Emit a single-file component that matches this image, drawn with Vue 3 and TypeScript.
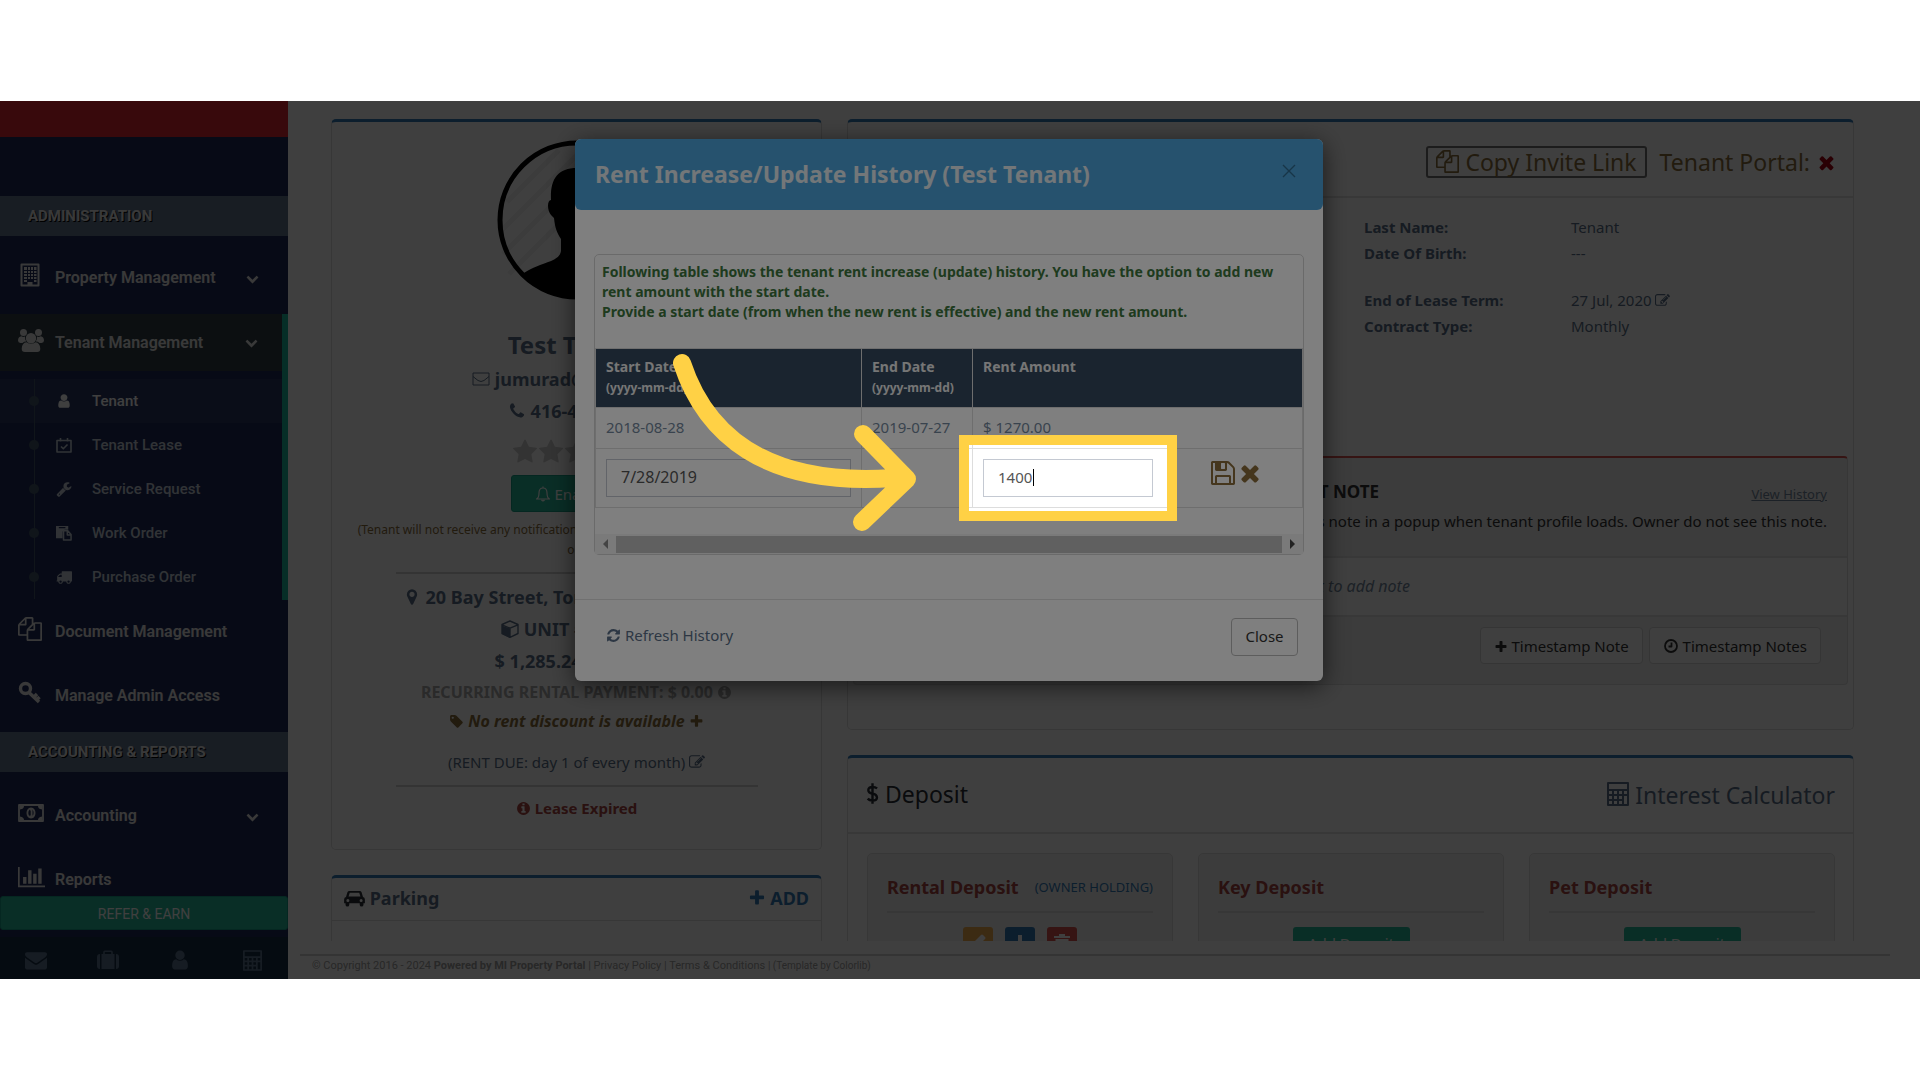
<script setup lang="ts">
import { h, ref } from 'vue'
import type { FunctionalComponent } from 'vue'

interface Glyph {
  box: number
  wide?: number
  fill?: string
  line?: string
  weight?: number
}

const glyphs: Record<string, Glyph> = {
  chevron: { box: 1792, fill: 'M1683 808l-742 741q-19 19-45 19t-45-19l-742-741q-19-19-19-45.5t19-45.5l166-165q19-19 45-19t45 19l531 531 531-531q19-19 45-19t45 19l166 165q19 19 19 45.5t-19 45.5z' },
  plus: { box: 1792, fill: 'M1600 736v192q0 40-28 68t-68 28h-416v416q0 40-28 68t-68 28h-192q-40 0-68-28t-28-68v-416h-416q-40 0-68-28t-28-68v-192q0-40 28-68t68-28h416v-416q0-40 28-68t68-28h192q40 0 68 28t28 68v416h416q40 0 68 28t28 68z' },
  times: { box: 1792, fill: 'M1490 1322q0 40-28 68l-136 136q-28 28-68 28t-68-28l-294-294-294 294q-28 28-68 28t-68-28l-136-136q-28-28-28-68t28-68l294-294-294-294q-28-28-28-68t28-68l136-136q28-28 68-28t68 28l294 294 294-294q28-28 68-28t68 28l136 136q28 28 28 68t-28 68l-294 294 294 294q28 28 28 68z' },
  envelope: { box: 1792, fill: 'M1792 710v794q0 66-47 113t-113 47h-1472q-66 0-113-47t-47-113v-794q44 49 101 87 362 246 497 345 57 42 92.5 65.5t94.5 48 110 24.5h2q51 0 110-24.5t94.5-48 92.5-65.5q170-123 498-345 57-39 100-87zm0-294q0 79-49 151t-122 123q-376 261-468 325-10 7-42.5 31t-54 38.5-52 32.5-57.5 27-50 9h-2q-23 0-50-9t-57.5-27-52-32.5-54-38.5-42.5-31q-91-64-262-182.5t-205-142.5q-62-42-117-115.5t-55-136.5q0-78 41.5-130t118.5-52h1472q65 0 112.5 47t47.5 113z' },
  envelopeOpen: { box: 18, line: 'M1 3h16v12H1zM1 6.500l5 4q3 2 6 0l5-4', weight: 1 },
  star: { box: 1792, fill: 'M1728 647q0 22-26 48l-363 354 86 500q1 7 1 20 0 21-10.500 35.500t-30.500 14.500q-19 0-40-12l-449-236-449 236q-22 12-40 12-21 0-31.500-14.500t-10.500-35.500q0-6 2-20l86-500-364-354q-25-27-25-48 0-37 56-46l502-73 225-455q19-41 49-41t49 41l225 455 502 73q56 9 56 46z' },
  user: { box: 1792, fill: 'M1536 1399q0 109-62.500 187t-150.500 78h-854q-88 0-150.500-78t-62.500-187q0-85 8.500-160.500t31.500-152 58.500-131 94-89 134.500-34.500q131 128 313 128t313-128q76 0 134.500 34.500t94 89 58.500 131 31.500 152 8.500 160.500zm-256-887q0 159-112.500 271.500t-271.500 112.500-271.500-112.500-112.500-271.500 112.500-271.500 271.500-112.500 271.500 112.500 112.500 271.500z' },
  info: { box: 1792, fill: 'M1152 1376v-160q0-14-9-23t-23-9h-96v-512q0-14-9-23t-23-9h-320q-14 0-23 9t-9 23v160q0 14 9 23t23 9h96v320h-96q-14 0-23 9t-9 23v160q0 14 9 23t23 9h448q14 0 23-9t9-23zm-128-896v-160q0-14-9-23t-23-9h-192q-14 0-23 9t-9 23v160q0 14 9 23t23 9h192q14 0 23-9t9-23zm640 416q0 209-103 385.500t-279.500 279.500-385.500 103-385.500-103-279.500-279.500-103-385.500 103-385.500 279.500-279.500 385.500-103 385.500 103 279.500 279.500 103 385.500z' },
  phone: { box: 1792, fill: 'M1600 1240q0 27-10 70.500t-21 68.500q-21 50-122 106-94 51-186 51-27 0-53-3.500t-57.500-12.500-47-14.500-55.500-20.500-49-18q-98-35-175-83-127-79-264-216t-216-264q-48-77-83-175-3-9-18-49t-20.500-55.500-14.500-47-12.500-57.500-3.500-53q0-92 51-186 56-101 106-122 25-11 68.500-21t70.500-10q14 0 21 3 18 6 53 76 11 19 30 54t35 63.500 31 53.500q3 4 17.500 25t21.500 35.500 7 28.500q0 20-28.500 50t-62 55-62 53-28.500 46q0 9 5 22.500t8.500 20.500 14 24 11.500 19q76 137 174 235t235 174q2 1 19 11.500t24 14 20.500 8.500 22.500 5q18 0 46-28.500t53-62 55-62 50-28.500q14 0 28.500 7t35.500 21.500 25 17.500q25 15 53.500 31t63.500 35 54 30q70 35 76 53 3 7 3 21z' },
  refresh: { box: 1792, fill: 'M1639 1056q0 5-1 7-64 268-268 434.500t-478 166.500q-146 0-282.500-55t-243.500-157l-129 129q-19 19-45 19t-45-19-19-45v-448q0-26 19-45t45-19h448q26 0 45 19t19 45-19 45l-137 137q71 66 161 102t187 36q134 0 250-65t186-179q11-17 53-117 8-23 30-23h192q13 0 22.500 9.500t9.500 22.500zm25-800v448q0 26-19 45t-45 19h-448q-26 0-45-19t-19-45 19-45l138-138q-148-137-349-137-134 0-250 65t-186 179q-11 17-53 117-8 23-30 23h-199q-13 0-22.500-9.500t-9.500-22.500v-7q65-268 270-434.500t480-166.500q146 0 284 55.500t245 156.500l130-129q19-19 45-19t45 19 19 45z' },
  truck: { box: 1792, fill: 'M640 1408q0-52-38-90t-90-38-90 38-38 90 38 90 90 38 90-38 38-90zm-384-512h384v-256h-158q-13 0-22 9l-195 195q-9 9-9 22v30zm1280 512q0-52-38-90t-90-38-90 38-38 90 38 90 90 38 90-38 38-90zm256-1088v1024q0 15-4 26.500t-13.500 18.500-16.500 11.500-23.500 6-22.500 2-25.500 0-22.500-.5q0 106-75 181t-181 75-181-75-75-181h-384q0 106-75 181t-181 75-181-75-75-181h-64q-3 0-22.500.5t-25.500 0-22.500-2-23.500-6-16.500-11.500-13.500-18.500-4-26.500q0-26 19-45t45-19v-320q0-8-.5-35t0-38 2.500-34.500 6.500-37 14-30.500 22.500-30l198-198q19-19 50.500-32t58.500-13h160v-192q0-26 19-45t45-19h1024q26 0 45 19t19 45z' },
  marker: { box: 1792, fill: 'M1152 640q0-106-75-181t-181-75-181 75-75 181 75 181 181 75 181-75 75-181zm256 0q0 109-33 179l-364 774q-16 33-47.500 52t-67.500 19-67.500-19-46.500-52l-365-774q-33-70-33-179 0-212 150-362t362-150 362 150 150 362z' },
  files: { box: 1792, fill: 'M1696 384q40 0 68 28t28 68v1216q0 40-28 68t-68 28h-960q-40 0-68-28t-28-68v-288h-544q-40 0-68-28t-28-68v-672q0-40 20-88t48-76l408-408q28-28 76-48t88-20h416q40 0 68 28t28 68v328q68-40 128-40h416zm-544 213l-299 299h299v-299zm-640-384l-299 299h299v-299zm196 647l316-316v-416h-384v416q0 40-28 68t-68 28h-416v640h512v-256q0-40 20-88t48-76zm956 804v-1152h-384v416q0 40-28 68t-68 28h-416v640h896z' },
  chart: { box: 1792, wide: 2048, fill: 'M640 896v512h-256v-512h256zm384-512v1024h-256v-1024h256zm1024 1152v128h-2048v-1536h128v1408h1920zm-640-896v768h-256v-768h256zm384-384v1152h-256v-1152h256z' },
  edit: { box: 1792, fill: 'M888 1184l116-116-152-152-116 116v56h96v96h56zm440-720q-16-16-33 1l-350 350q-17 17-1 33t33-1l350-350q17-17 1-33zm80 594v190q0 119-84.500 203.500t-203.500 84.500h-832q-119 0-203.500-84.500t-84.500-203.500v-832q0-119 84.500-203.500t203.500-84.500h832q63 0 117 25 15 7 18 23 3 17-9 29l-49 49q-14 14-32 8-23-6-45-6h-832q-66 0-113 47t-47 113v832q0 66 47 113t113 47h832q66 0 113-47t47-113v-126q0-13 9-22l64-64q15-15 35-7t20 29zm-96-738l288 288-672 672h-288v-288zm444 132l-92 92-288-288 92-92q28-28 68-28t68 28l152 152q28 28 28 68t-28 68z' },
  wrench: { box: 1792, fill: 'M448 1472q0-26-19-45t-45-19-45 19-19 45 19 45 45 19 45-19 19-45zm644-420l-682 682q-37 37-90 37-52 0-91-37l-106-108q-38-36-38-90 0-53 38-91l681-681q39 98 114.500 173.500t173.500 114.500zm634-435q0 39-23 106-47 134-164.500 217.500t-258.500 83.500q-185 0-316.500-131.500t-131.500-316.500 131.500-316.500 316.500-131.500q58 0 121.500 16.500t107.500 46.500q16 11 16 28t-16 28l-293 169v224l193 107q5-3 79-48.500t135.500-81 70.500-35.500q15 0 23.500 10t8.500 25z' },
  floppy: { box: 1792, fill: 'M512 1536h768v-384h-768v384zm896 0h128v-896q0-14-10-38.500t-20-34.500l-281-281q-10-10-34-20t-39-10v416q0 40-28 68t-68 28h-576q-40 0-68-28t-28-68v-416h-128v1280h128v-416q0-40 28-68t68-28h832q40 0 68 28t28 68v416zm-384-928v-320q0-13-9.500-22.500t-22.500-9.500h-192q-13 0-22.500 9.500t-9.500 22.500v320q0 13 9.500 22.500t22.500 9.500h192q13 0 22.500-9.500t9.500-22.500zm640 32v928q0 40-28 68t-68 28h-1344q-40 0-68-28t-28-68v-1344q0-40 28-68t68-28h928q40 0 88 20t76 48l280 280q28 28 48 76t20 88z' },
  tag: { box: 1792, fill: 'M576 448q0-53-37.500-90.500t-90.500-37.500-90.500 37.500-37.500 90.500 37.500 90.500 90.500 37.500 90.500-37.500 37.500-90.500zm1067 576q0 53-37 90l-491 492q-39 37-91 37-53 0-90-37l-715-716q-38-37-64.500-101t-26.500-117v-416q0-52 38-90t90-38h416q53 0 117 26.500t102 64.500l715 714q37 39 37 91z' },
  cube: { box: 18, fill: 'M9 8.500v9.500L1.500 14Q1 13.700 1 13V5.500z', line: 'M9 1L17 4.500V13.500L9 17.300 1 13.500V4.500zM1 4.800L9 8.200 17 4.800M9 8.200V17', weight: 1.4 },
  clock: { box: 16, line: 'M8 2a6 6 0 1 1 0 12a6 6 0 1 1 0-12M8.500 4.500V8.500H5.500', weight: 1.8 },
  building: { box: 24, line: 'M3.500 1.500h17v21h-17z', weight: 2, fill: 'M6 4h3v3H6zM10 4h2v3h-2zM13 4h2v3h-2zM16 4h2.500v3H16zM6 8h3v2H6zM10 8h2v2h-2zM13 8h2v2h-2zM16 8h2.500v2H16zM6 11h3v2H6zM10 11h2v2h-2zM13 11h2v2h-2zM16 11h2.500v2H16zM6 14h3v2H6zM10 14h2v2h-2zM13 14h2v2h-2zM16 14h2.500v2H16zM6 17h3v2H6zM16 17h2.500v2H16zM9.500 19h5v4h-5z' },
  users: { box: 24, wide: 26, fill: 'M13 5a5.200 5.200 0 1 1 0 10.400a5.200 5.200 0 1 1 0-10.400M5.500 1a3.500 3.500 0 1 1 0 7a3.500 3.500 0 1 1 0-7M20.500 1a3.500 3.500 0 1 1 0 7a3.500 3.500 0 1 1 0-7M8.500 14.300q4.500 3.500 9 0q4.500.5 4.800 6.500q0 3.200-3.200 3.200H7q-3.300 0-3.300-3.200q.3-6 4.800-6.500zM3.300 8.300q2 1.200 3.700.3q-.5 3 1.300 5q-2.300 0-3.800 1.300H2.500Q0 14.700 0 12.500q.2-3.900 3.300-4.200zM22.700 8.300q-2 1.200-3.700.3q.5 3-1.300 5q2.300 0 3.800 1.300h2q2.500-.2 2.500-2.400q-.2-3.900-3.300-4.200z' },
  calendar: { box: 16, line: 'M1 3.500h14v11.500H1zM4.500 1v3.500M11.500 1v3.500M5 9.500l2.300 2.300L11.500 7.500', weight: 1.6 },
  paste: { box: 17, fill: 'M0 1h13v4H9.500q-2.500 0-2.500 2.500V14H0zM3 2v1.500h7V2z', line: 'M8 6h4.500l3.500 4v6H8zM12 6v4.500h4', weight: 1.6 },
  key: { box: 24, line: 'M7.500 2.500a5 5 0 1 1 0 10a5 5 0 1 1 0-10M11 11.500L21 21M16 16l3-3M19 18.500l2.500-2.500', weight: 3.4 },
  money: { box: 18, wide: 26, line: 'M1 1h24v16H1zM12 6l1.600-1V12.500M11.500 12.500h4', weight: 1.8, fill: 'M2 2h4q0 3-4 3.500zM24 2h-4q0 3 4 3.500zM2 16h4q0-3-4-3.500zM24 16h-4q0-3 4-3.500zM13 3.500c6 0 6 11 0 11s-6-11 0-11m0 1.800c-3.500 0-3.500 7.400 0 7.400s3.500-7.400 0-7.400' },
  suitcase: { box: 20, wide: 22, fill: 'M0 7q0-3 3-3v15q-3 0-3-3zM4.500 4H17.500v15H4.500zM19 4q3 0 3 3v9q0 3-3 3z', line: 'M7 4V2q0-.8.8-.8h6.400q.8 0 .8.800V4', weight: 1.6 },
  calculator: { box: 24, wide: 22, line: 'M1 1h20v22H1zM1 8h20M6 8v15M11 8v15M16 8v15M1 13h20M1 18h15', weight: 2 },
  car: { box: 18, wide: 22, fill: 'M5.500 1h11q1.500 0 2 1.500l1.500 5q2 .5 2 2.500v4h-1.500v1.500q0 2-2 2t-2-2V14h-11v1.500q0 2-2 2t-2-2V14H0v-4q0-2 2-2.500l1.500-5Q4 1 5.500 1zM6 3L4.700 7h12.600L16 3zM4 9.500a1.600 1.600 0 1 0 0 3.200a1.600 1.600 0 1 0 0-3.200M18 9.500a1.600 1.600 0 1 0 0 3.200a1.600 1.600 0 1 0 0-3.200' },
  bell: { box: 16, line: 'M8 2q4 0 4 5t2.500 6h-13Q4 12 4 7t4-5zM8 .5V2M6.500 14q1.500 1.800 3 0', weight: 1.2 },
  dollar: { box: 24, wide: 14, line: 'M12 6.500Q10 5 7 5 2.500 5 2.500 8.300t4.500 3.900 4.800 4Q11.800 19.500 7 19.500q-3.500 0-5.200-2M7 1v22', weight: 2.6 },
  pencil: { box: 18, fill: 'M1 17l1-5L12 2q1-1 2 0l2 2q1 1 0 2L6 16z' },
  download: { box: 18, fill: 'M7 2h4v7h4l-6 6-6-6h4z' },
  trash: { box: 18, fill: 'M6 1h6v2h5v2H1V3h5zM2.500 6h13v11h-13z' },
}

const Icon: FunctionalComponent<{ name: string; size: number }> = (props) => {
  const g = glyphs[props.name]
  const wide = g.wide ?? g.box
  return h(
    'svg',
    {
      class: 'icon',
      viewBox: `0 0 ${wide} ${g.box}`,
      height: props.size,
      width: Math.round((props.size * wide) / g.box),
      'aria-hidden': 'true',
    },
    [
      g.fill ? h('path', { d: g.fill, fill: 'currentColor', 'fill-rule': g.box < 100 ? 'evenodd' : 'nonzero' }) : null,
      g.line
        ? h('path', { d: g.line, fill: 'none', stroke: 'currentColor', 'stroke-width': g.weight, 'stroke-linejoin': 'round' })
        : null,
    ],
  )
}
Icon.props = ['name', 'size']

const tenantLinks = [
  { label: 'Tenant', icon: 'user' },
  { label: 'Tenant Lease', icon: 'calendar' },
  { label: 'Service Request', icon: 'wrench' },
  { label: 'Work Order', icon: 'paste' },
  { label: 'Purchase Order', icon: 'truck' },
]

const details = [
  { label: 'Last Name:', value: 'Tenant' },
  { label: 'Date Of Birth:', value: '---' },
  { label: 'End of Lease Term:', value: '27 Jul, 2020', editable: true },
  { label: 'Contract Type:', value: 'Monthly' },
]

const startDate = ref('7/28/2019')
const rentAmount = ref('1400')
</script>

<template>
  <div class="frame">
    <div class="stage">
      <aside class="sidebar">
        <div class="brand"></div>
        <nav class="nav">
          <h3 class="band">ADMINISTRATION</h3>
          <div class="group">
            <a href="#" class="item"><span class="glyph"><Icon name="building" :size="24" /></span>Property Management<Icon class="caret" name="chevron" :size="13" /></a>
            <div class="open">
              <a href="#" class="item current"><span class="glyph"><Icon name="users" :size="24" /></span>Tenant Management<Icon class="caret" name="chevron" :size="13" /></a>
              <ul class="sub">
                <li v-for="(link, i) in tenantLinks" :key="link.label" :class="{ active: i === 0 }">
                  <a href="#"><span class="sub-glyph"><Icon :name="link.icon" :size="16" /></span>{{ link.label }}</a>
                </li>
              </ul>
            </div>
            <a href="#" class="item"><span class="glyph"><Icon name="files" :size="24" /></span>Document Management</a>
            <a href="#" class="item"><span class="glyph"><Icon name="key" :size="24" /></span>Manage Admin Access</a>
          </div>
          <h3 class="band">ACCOUNTING &amp; REPORTS</h3>
          <div class="group">
            <a href="#" class="item"><span class="glyph"><Icon name="money" :size="18" /></span>Accounting<Icon class="caret" name="chevron" :size="13" /></a>
            <a href="#" class="item"><span class="glyph"><Icon name="chart" :size="24" /></span>Reports</a>
          </div>
        </nav>
        <button type="button" class="refer">REFER &amp; EARN</button>
        <div class="tools">
          <a href="#" aria-label="Messages"><Icon name="envelope" :size="22" /></a>
          <a href="#" aria-label="Properties"><Icon name="suitcase" :size="20" /></a>
          <a href="#" aria-label="Profile"><Icon name="user" :size="22" /></a>
          <a href="#" aria-label="Calculator"><Icon name="calculator" :size="21" /></a>
        </div>
      </aside>

      <main class="main">
        <div class="content">
          <div class="column">
            <section class="card profile">
              <svg class="avatar" viewBox="0 0 160 160" aria-hidden="true">
                <defs>
                  <clipPath id="face"><circle cx="80" cy="80" r="78" /></clipPath>
                </defs>
                <circle cx="80" cy="80" r="77" fill="#fff" />
                <path d="M10 62L62 10M3 92L92 3M6 114L114 6M12 134L134 12" stroke="#f0f0f0" stroke-width="5" />
                <g clip-path="url(#face)">
                  <path d="M80 28c-20 0-27 12-26 32-4 0-4 10 0 15l3 3c1 10 3 15 7 21v12c-2 12-20 10-40 24v30h112v-30c-20-14-38-12-40-24V99c4-6 6-11 7-21l3-3c4-5 4-15 0-15 1-20-6-32-26-32z" fill="#000" />
                </g>
                <circle cx="80" cy="80" r="77" fill="none" stroke="#000" stroke-width="5" />
              </svg>
              <h2 class="name">Test Tenant</h2>
              <div class="line"><Icon name="envelopeOpen" :size="18" /> jumurad@gmail.com</div>
              <div class="line"><Icon name="phone" :size="18" /> 416-400-0000</div>
              <div class="stars"><Icon v-for="n in 5" :key="n" name="star" :size="26" /></div>
              <button type="button" class="green enable"><Icon name="bell" :size="16" /> Enable</button>
              <p class="hint">(Tenant will not receive any notifications by email or by text until this is turned<br />on)</p>
              <hr />
              <div class="line"><Icon name="marker" :size="18" /> 20 Bay Street, Toronto, ON - M5J 2N8</div>
              <div class="line"><Icon name="cube" :size="18" /> UNIT # PH-101</div>
              <div class="line">$ 1,285.24 / month</div>
              <div class="recurring">RECURRING RENTAL PAYMENT: $ 0.00 <Icon name="info" :size="15" /></div>
              <div class="discount"><Icon name="tag" :size="15" /> <em>No rent discount is available</em> <Icon name="plus" :size="15" /></div>
              <div class="due">(RENT DUE: day 1 of every month) <Icon name="edit" :size="16" /></div>
              <hr />
              <div class="expired"><Icon name="info" :size="15" /> Lease Expired</div>
            </section>
            <section class="card">
              <header class="parking">
                <span><Icon class="dark" name="car" :size="17" /> Parking</span>
                <a href="#"><Icon name="plus" :size="18" /> ADD</a>
              </header>
            </section>
          </div>

          <div class="column">
            <section class="card overview">
              <header class="head portal">
                <button type="button" class="invite"><Icon name="files" :size="23" /> Copy Invite Link</button>
                <span>Tenant Portal: <Icon class="red" name="times" :size="21" /></span>
              </header>
              <dl class="details">
                <div v-for="(d, i) in details" :key="d.label" :class="{ spaced: i === 2 }">
                  <dt>{{ d.label }}</dt>
                  <dd>{{ d.value }} <Icon v-if="d.editable" name="edit" :size="15" /></dd>
                </div>
              </dl>
              <section class="note">
                <div class="note-head">
                  <h4>IMPORTANT NOTE</h4>
                  <a href="#">View History</a>
                  <p>System shows this note in a popup when tenant profile loads. Owner do not see this note.</p>
                </div>
                <div class="note-body">Click to add note</div>
                <div class="note-foot">
                  <button type="button"><Icon name="plus" :size="14" /> Timestamp Note</button>
                  <button type="button"><Icon name="clock" :size="16" /> Timestamp Notes</button>
                </div>
              </section>
            </section>
            <section class="card">
              <header class="head">
                <span class="dark"><Icon name="dollar" :size="23" /> Deposit</span>
                <a href="#"><Icon name="calculator" :size="24" /> Interest Calculator</a>
              </header>
              <div class="deposits">
                <article>
                  <h4>Rental Deposit <small>(OWNER HOLDING)</small></h4>
                  <div class="actions">
                    <button type="button" class="amber" aria-label="Edit"><Icon name="pencil" :size="18" /></button>
                    <button type="button" class="blue" aria-label="Download"><Icon name="download" :size="18" /></button>
                    <button type="button" class="danger" aria-label="Delete"><Icon name="trash" :size="18" /></button>
                  </div>
                </article>
                <article>
                  <h4>Key Deposit</h4>
                  <div class="actions"><button type="button" class="green">Add Deposit</button></div>
                </article>
                <article>
                  <h4>Pet Deposit</h4>
                  <div class="actions"><button type="button" class="green">Add Deposit</button></div>
                </article>
              </div>
            </section>
          </div>
        </div>
        <footer class="legal">
          © Copyright 2016 - 2024 <b>Powered by MI Property Portal</b> | <a href="#">Privacy Policy</a> | <a href="#">Terms &amp; Conditions</a> <small>| (Template by Colorlib)</small>
        </footer>
      </main>

      <div class="backdrop">
        <div class="modal" role="dialog" aria-labelledby="modal-title">
          <header class="modal-head">
            <h2 id="modal-title">Rent Increase/Update History (Test Tenant)</h2>
            <button type="button" aria-label="Close dialog"><svg width="14" height="14" viewBox="0 0 14 14"><path d="M1 1l12 12M13 1L1 13" stroke="currentColor" stroke-width="1.4" /></svg></button>
          </header>
          <div class="modal-body">
            <div class="panel">
              <p>
                Following table shows the tenant rent increase (update) history. You have the option to add new<br />
                rent amount with the start date.<br />
                Provide a start date (from when the new rent is effective) and the new rent amount.
              </p>
              <table>
                <thead>
                  <tr>
                    <th class="start">Start Date<br /><small>(yyyy-mm-dd)</small></th>
                    <th class="end">End Date<br /><small>(yyyy-mm-dd)</small></th>
                    <th>Rent Amount</th>
                  </tr>
                </thead>
                <tbody>
                  <tr>
                    <td>2018-08-28</td>
                    <td>2019-07-27</td>
                    <td>$ 1270.00</td>
                  </tr>
                  <tr class="entry">
                    <td><input v-model="startDate" class="date" type="text" aria-label="Start date" /></td>
                    <td></td>
                    <td>
                      <div class="amount">
                        <div class="target">
                          <input v-model="rentAmount" type="text" aria-label="Rent amount" />
                          <span class="cursor"></span>
                          <span class="spotlight"></span>
                          <svg class="arrow" viewBox="0 0 248 180" aria-hidden="true">
                            <path d="M11 10C34 80 92 134 222 125M192 81L236 126L191 169" />
                          </svg>
                        </div>
                        <button type="button" aria-label="Save"><Icon name="floppy" :size="28" /></button>
                        <button type="button" aria-label="Cancel"><Icon name="times" :size="26" /></button>
                      </div>
                    </td>
                  </tr>
                </tbody>
              </table>
              <div class="scroller"><i class="left"></i><span></span><i class="right"></i></div>
            </div>
          </div>
          <footer class="modal-foot">
            <a href="#"><Icon name="refresh" :size="15" /> Refresh History</a>
            <button type="button">Close</button>
          </footer>
        </div>
      </div>
    </div>
  </div>
</template>

<style>
body {
  margin: 0;
  background: #fff;
}
</style>

<style scoped>
* {
  box-sizing: border-box;
}
.frame {
  min-height: 100vh;
  padding: 101px 0;
  font: 15px/24px 'Noto Sans', 'Open Sans', sans-serif;
  color: #5a6f88;
}
.stage {
  position: relative;
  display: flex;
  height: calc(100vh - 202px);
  overflow: hidden;
  background: #fff;
}
.icon {
  display: inline-block;
  vertical-align: -2px;
  flex: none;
}
a {
  color: inherit;
  text-decoration: none;
}
button {
  font: inherit;
  color: inherit;
  cursor: pointer;
}
h2, h3, h4, p, ul, dl, dd {
  margin: 0;
  padding: 0;
}

/* Sidebar */
.sidebar {
  display: flex;
  flex-direction: column;
  flex: none;
  width: 288px;
  background: #1e2b58;
  font-family: Roboto, sans-serif;
  color: #e7e7e7;
}
.brand {
  height: 95px;
  flex: none;
  border-top: 36px solid #e02530;
}
.nav {
  flex: 1;
  min-height: 0;
  overflow: hidden;
}
.band {
  height: 40px;
  padding-left: 28px;
  background: #60748e;
  font-size: 15px;
  line-height: 40px;
  text-shadow: 1px 1px #000;
}
.group {
  padding: 10px 0 4px;
}
.group:last-child {
  padding-top: 12px;
}
.item {
  display: flex;
  align-items: center;
  height: 64px;
  padding: 0 29px 0 18px;
  font-size: 16px;
  font-weight: 600;
}
.glyph {
  display: flex;
  width: 37px;
  padding-bottom: 6px;
}
.caret {
  margin-left: auto;
}
.open {
  margin-top: 4px;
  padding-bottom: 1px;
  border-right: 6px solid #1abb9c;
}
.current {
  height: 57px;
  padding-right: 24px;
  background: #303e46;
}
.sub {
  position: relative;
  padding-top: 8px;
  list-style: none;
  font-size: 15px;
  font-weight: 500;
  color: #c4cfda;
}
.sub::before {
  content: '';
  position: absolute;
  top: 8px;
  bottom: 0;
  left: 34px;
  width: 1px;
  background: #425668;
}
.sub li {
  display: flex;
  align-items: center;
  height: 44px;
  padding-left: 29px;
}
.sub li::before {
  content: '';
  width: 10px;
  height: 10px;
  margin-right: 17px;
  border-radius: 50%;
  background: #425668;
}
.sub .active {
  background: #2a3760;
  color: #fff;
}
.sub a {
  display: flex;
  align-items: center;
}
.sub-glyph {
  display: flex;
  width: 36px;
}
.refer {
  height: 34px;
  padding-top: 3px;
  margin-bottom: 7px;
  border: 1px solid #169f85;
  border-radius: 3px;
  background: #26b99a;
  color: #fff;
  font-size: 14px;
}
.tools {
  display: flex;
  height: 42px;
  background: #172d44;
  color: #5a738e;
}
.tools a {
  display: flex;
  flex: 1;
  align-items: center;
  justify-content: center;
  padding-top: 4px;
}

/* Main area */
.main {
  display: flex;
  flex: 1;
  flex-direction: column;
  min-width: 0;
}
.content {
  display: grid;
  flex: 1;
  grid-template-columns: minmax(0, 491fr) minmax(0, 1007fr);
  gap: 25px;
  min-height: 0;
  padding: 18px 66px 0 43px;
  overflow: hidden;
}
.column {
  display: flex;
  flex-direction: column;
  gap: 25px;
}
.card {
  flex: none;
  border: 1px solid #dedede;
  border-top: 3px solid #337ab7;
  border-radius: 5px;
}
.column > .card:last-child {
  height: 300px;
}
.profile {
  display: flex;
  flex-direction: column;
  align-items: center;
  padding: 18px 20px 29px;
  text-align: center;
}
.profile hr {
  width: 362px;
  height: 2px;
  margin: 12px 0 7px;
  border: 0;
  background: #d0d0d0;
}
.avatar {
  width: 160px;
  height: 160px;
}
.name {
  margin: 29px 0 2px;
  font-size: 24px;
  line-height: 32px;
}
.line {
  font-size: 18px;
  font-weight: 700;
  line-height: 32px;
  white-space: nowrap;
}
.stars {
  display: flex;
  margin-top: 12px;
  color: #cfcfcf;
}
.green {
  border: 1px solid #169f85;
  border-radius: 3px;
  background: #26b99a;
  color: #fff;
}
.enable {
  width: 132px;
  height: 37px;
  margin: 10px 0 8px;
  padding: 0 0 0 23px;
  text-align: left;
}
.hint {
  font-size: 12px;
  line-height: 20px;
  color: #8a6d3b;
  white-space: nowrap;
}
.recurring {
  font-size: 16px;
  font-weight: 700;
  line-height: 30px;
  color: #a8a8a8;
}
.discount {
  margin-bottom: 16px;
  font-size: 16px;
  font-weight: 700;
  line-height: 28px;
  color: #8a6d3b;
}
.due {
  line-height: 22px;
}
.expired {
  margin-top: 2px;
  font-weight: 700;
  color: #a94442;
}
.parking {
  display: flex;
  justify-content: space-between;
  align-items: center;
  height: 43px;
  padding: 0 12px 2px;
  border-bottom: 1px solid #dedede;
  font-size: 18px;
  font-weight: 700;
}
.parking a {
  color: #337ab7;
}
.dark {
  color: #2a2f36;
}
.red {
  color: #a90010;
}
.head {
  display: flex;
  justify-content: space-between;
  align-items: center;
  height: 76px;
  padding: 0 18px 2px;
  border-bottom: 2px solid #e2e2e2;
  font-size: 23px;
}
.portal {
  justify-content: flex-end;
  gap: 13px;
  padding: 6px 16px 0 0;
  color: #8a6d3b;
}
.invite {
  height: 32px;
  padding: 0 8px;
  border: 2px solid #707070;
  border-radius: 3px;
  background: none;
  line-height: 26px;
}
.overview {
  height: 611px;
}
.details {
  height: 258px;
  padding: 16px 0 0 516px;
  font-size: 15px;
  line-height: 26px;
}
.details div {
  display: flex;
}
.details .spaced {
  margin-top: 21px;
}
.details dt {
  width: 207px;
  font-weight: 700;
}
.note {
  margin: 0 5px;
  border: 1px solid #dedede;
  border-top: 2px solid #d9534f;
  border-radius: 4px;
  background: #f0f0f0;
  color: #333;
}
.note-head {
  display: grid;
  grid-template-rows: 34px 24px;
  grid-template-columns: 525px 1fr;
  height: 100px;
  padding: 17px 20px 0 0;
  border-bottom: 2px solid #e2e2e2;
  text-align: right;
}
.note-head h4 {
  font-size: 17px;
  line-height: 34px;
}
.note-head a {
  font-size: 13px;
  line-height: 38px;
  color: #73879c;
  text-decoration: underline;
}
.note-head p {
  grid-column: span 2;
}
.note-body {
  height: 59px;
  border-bottom: 2px solid #e2e2e2;
  background: #fff;
  color: #73879c;
  font-size: 16px;
  font-style: italic;
  line-height: 56px;
  text-align: center;
}
.note-foot {
  display: flex;
  justify-content: flex-end;
  gap: 6px;
  height: 67px;
  padding: 10px 26px 0 0;
}
.note-foot button {
  height: 37px;
  padding: 0 13px;
  border: 1px solid #d5d5d5;
  border-radius: 4px;
  background: #fff;
}
.deposits {
  display: grid;
  grid-template-columns: repeat(3, minmax(0, 1fr));
  gap: 25px;
  padding: 19px 18px 19px 19px;
}
.deposits article {
  height: 200px;
  padding: 20px 19px;
  border: 1px solid #dedede;
  border-radius: 5px;
  background: #f3f3f3;
}
.deposits h4 {
  display: flex;
  justify-content: space-between;
  align-items: center;
  height: 39px;
  padding-bottom: 12px;
  border-bottom: 2px solid #dedede;
  color: #a94442;
  font-size: 18px;
  white-space: nowrap;
}
.deposits small {
  color: #337ab7;
  font-size: 13px;
  font-weight: 400;
}
.actions {
  display: flex;
  justify-content: center;
  gap: 12px;
  padding-top: 14px;
}
.actions button {
  width: 30px;
  height: 32px;
  padding: 0;
  border: 0;
  border-radius: 3px;
  color: #fff;
}
.actions .green {
  width: 117px;
}
.amber {
  background: #f0ad4e;
}
.blue {
  background: #337ab7;
}
.danger {
  background: #d9534f;
}
.legal {
  height: 25px;
  margin: 13px 30px 0 12px;
  padding-left: 12px;
  border-top: 2px solid #d0d0d0;
  color: #a0a0a0;
  font: 11px/20px Roboto, sans-serif;
}
.legal small {
  font-size: 10px;
}

/* Dialog */
.backdrop {
  position: absolute;
  inset: 0;
  display: flex;
  justify-content: center;
  align-items: flex-start;
  padding: 38px 22px 0 0;
  background: rgba(0, 0, 0, 0.5);
}
.modal {
  width: 748px;
  border-radius: 6px;
  background: #fff;
  box-shadow: 0 5px 25px rgba(0, 0, 0, 0.6);
}
.modal-head {
  display: flex;
  justify-content: space-between;
  align-items: center;
  height: 71px;
  padding: 0 27px 2px 20px;
  border-radius: 6px;
  background: #4da5dd;
}
.modal-head h2 {
  color: #e7eef2;
  font-size: 23px;
  line-height: 32px;
}
.modal-head button {
  display: flex;
  padding: 0 0 6px;
  border: 0;
  background: none;
  color: #2e6a90;
}
.modal-body {
  padding: 44px 19px;
  border-bottom: 1px solid #e0e0e0;
}
.panel {
  padding-top: 7px;
  border: 1px solid #d5d5d5;
  border-radius: 5px;
}
.panel p {
  margin-bottom: 26px;
  padding: 0 7px;
  color: #3c763d;
  font-size: 14px;
  font-weight: 700;
  line-height: 20px;
  white-space: nowrap;
}
table {
  width: 100%;
  border-collapse: collapse;
  table-layout: fixed;
}
th,
td {
  height: 41px;
  padding: 0 10px;
  border: 1px solid #ddd;
  font-size: 15px;
  line-height: 20px;
  text-align: left;
}
th {
  height: 59px;
  padding-top: 8px;
  background: #34495e;
  color: #ececec;
  font-size: 14px;
  vertical-align: top;
}
th small {
  font-size: 12px;
}
.start {
  width: 266px;
}
.end {
  width: 111px;
}
td {
  padding-bottom: 2px;
  color: #73879c;
}
.entry td {
  height: 59px;
  padding-bottom: 0;
}
td input {
  display: block;
  width: 100%;
  height: 38px;
  padding: 0 14px 2px;
  border: 1px solid #c4c9d2;
  outline: 0;
  background: #fff;
  color: #555;
  font: 15px/24px 'Noto Sans', sans-serif;
}
td .date {
  font-size: 16px;
}
.amount {
  display: flex;
  align-items: center;
}
.target {
  position: relative;
  width: 170px;
  margin-right: 56px;
}
.amount button {
  display: flex;
  padding: 0 0 10px;
  border: 0;
  background: none;
  color: #8a6d3b;
}
.cursor {
  position: absolute;
  top: 10px;
  left: 50px;
  width: 1px;
  height: 17px;
  background: #000;
}
.spotlight {
  position: absolute;
  inset: -24px;
  border: 10px solid #ffd145;
  box-shadow: 0 0 0 3000px rgba(0, 0, 0, 0.5);
  pointer-events: none;
}
.arrow {
  position: absolute;
  top: -106px;
  left: -312px;
  width: 248px;
  height: 180px;
  fill: none;
  stroke: #ffd145;
  stroke-width: 18;
  stroke-linecap: round;
  stroke-linejoin: round;
  pointer-events: none;
}
.scroller {
  display: flex;
  justify-content: space-between;
  align-items: center;
  height: 20px;
  margin-top: 26px;
  padding: 0 8px;
  background: #f4f4f4;
}
.scroller span {
  flex: 1;
  height: 17px;
  margin: 0 8px;
  background: #c1c1c1;
}
.scroller i {
  border: 5px solid transparent;
}
.scroller .left {
  border-left: 0;
  border-right-color: #888;
}
.scroller .right {
  border-right: 0;
  border-left-color: #444;
}
.modal-foot {
  display: flex;
  justify-content: space-between;
  align-items: center;
  height: 81px;
  padding: 0 25px 8px 31px;
}
.modal-foot a {
  padding-bottom: 4px;
  color: #5a6f88;
}
.modal-foot button {
  width: 67px;
  height: 38px;
  padding: 0 0 2px;
  border: 1px solid #bbb;
  border-radius: 4px;
  background: #fff;
  color: #333;
}
</style>
